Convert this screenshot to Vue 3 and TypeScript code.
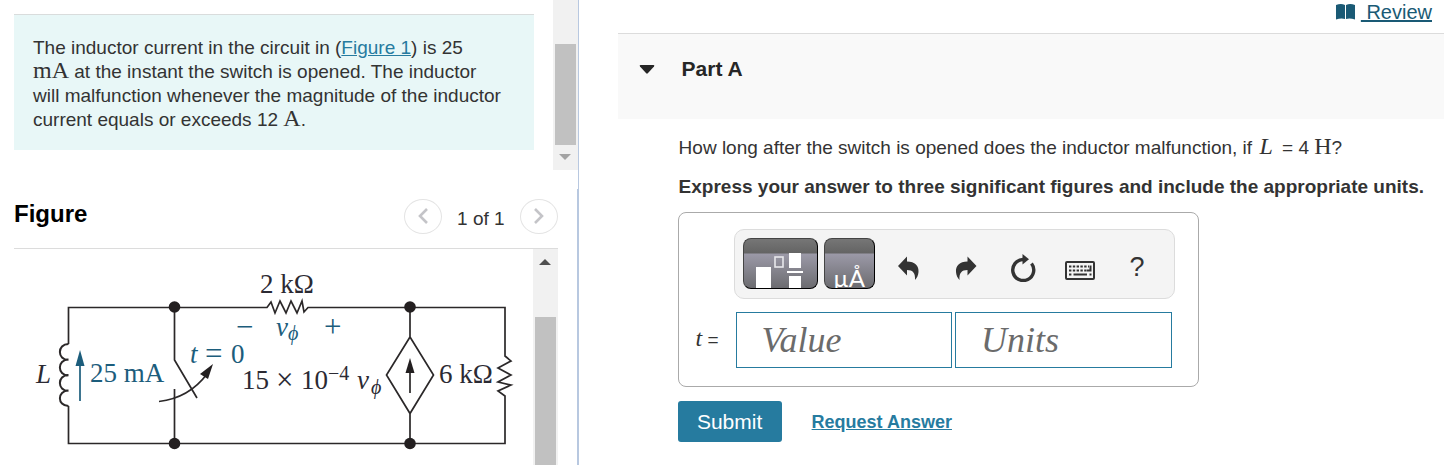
<script setup lang="ts">
import { ref } from 'vue'

const value = ref('')
const units = ref('')
const open = ref(true)
</script>

<template>
  <div class="page">
    <aside class="left">
      <section class="intro">
        <div class="intro-body">
          <p class="problem">
            The inductor current in the circuit in (<a href="#figure">Figure 1</a>) is 25<br />
            <span class="math">mA</span> at the instant the switch is opened. The inductor<br />
            will malfunction whenever the magnitude of the inductor<br />
            current equals or exceeds 12 <span class="math">A</span>.
          </p>
        </div>
        <div class="bar bar-intro" aria-hidden="true">
          <span class="thumb thumb-intro"></span>
          <svg class="tri" width="12" height="6" viewBox="0 0 12 6"><path d="M0 0H12L6 6Z" fill="#a3a3a3" /></svg>
        </div>
      </section>

      <section id="figure" class="figure">
        <header class="figure-head">
          <h2>Figure</h2>
          <nav class="pager" aria-label="Figure pages">
            <button class="round" type="button" aria-label="Previous figure">
              <svg width="12" height="18" viewBox="0 0 12 18"><path d="M10 2L3 9L10 16" fill="none" stroke="#c4c4c8" stroke-width="2.600" /></svg>
            </button>
            <span class="count">1 of 1</span>
            <button class="round" type="button" aria-label="Next figure">
              <svg width="12" height="18" viewBox="0 0 12 18"><path d="M2 2L9 9L2 16" fill="none" stroke="#c4c4c8" stroke-width="2.600" /></svg>
            </button>
          </nav>
        </header>
        <div class="figure-body">
          <div class="canvas">
            <svg class="circuit" width="519" height="212" viewBox="14 249 519 212" role="img" aria-label="Circuit diagram">
              <g fill="none" stroke="#2b2829" stroke-width="1.7">
                <path d="M68.500 344V307.500H267L271 302L275 313L280 301L286 313L291 301L297 313L302 301L304 312L308 307.500H505V356L511 361L498 368L511 375L498 382L511 385L498 391L505 396V443.500H68.500V406" />
                <path d="M68.500 344C57 344 57 360 68.500 360M68.500 359.500C57 359.500 57 375.500 68.500 375.500M68.500 375C57 375 57 391 68.500 391M68.500 390.500C57 390.500 57 406 68.500 406" stroke-width="2" />
                <path d="M174.500 307V360L197 398M174.500 389V443" />
                <path d="M159 401.500C180 399 195 390 207 374" />
                <path d="M410 307V337L433.500 375L410 413.500L386.500 375L410 337M410 413.500V443M410 393V370" />
              </g>
              <g fill="#231f20">
                <circle cx="174.500" cy="307" r="5.800" />
                <circle cx="174.500" cy="443.500" r="5.800" />
                <circle cx="410" cy="307" r="5.800" />
                <circle cx="410" cy="443.500" r="5.800" />
                <path d="M213 364L208 379L200 374Z" />
                <path d="M410 358L414.500 373H405.500Z" />
              </g>
              <path d="M80 401V364" stroke="#1c5d7c" stroke-width="1.700" />
              <path d="M80 350L84.500 366H75.500Z" fill="#1c5d7c" />
              <g class="ink">
                <text x="36" y="383" class="it">L</text>
                <text x="260" y="293">2 kΩ</text>
                <text x="242" y="389">15</text>
                <text x="276" y="390" class="op">×</text>
                <text x="301" y="389">10</text>
                <text x="328" y="380" class="sup">−4</text>
                <text x="357" y="389" class="it">v</text>
                <text x="371" y="394" class="it sub">ϕ</text>
                <text x="439" y="383">6 kΩ</text>
              </g>
              <g class="blue">
                <text x="90" y="382">25 mA</text>
                <text x="190" y="363" class="it">t</text>
                <text x="205" y="364" class="op">=</text>
                <text x="231" y="363">0</text>
                <text x="236" y="337" class="op">−</text>
                <text x="276" y="336" class="it">v</text>
                <text x="288" y="340" class="it sub">ϕ</text>
                <text x="324" y="337" class="op">+</text>
              </g>
            </svg>
          </div>
          <div class="bar bar-figure" aria-hidden="true">
            <svg class="tri" width="12" height="6" viewBox="0 0 12 6"><path d="M0 6H12L6 0Z" fill="#505050" /></svg>
            <span class="thumb thumb-figure"></span>
          </div>
        </div>
      </section>
    </aside>

    <main class="right">
      <div class="review">
        <svg width="20" height="16" viewBox="0 0 20 16" aria-hidden="true">
          <path d="M0 1Q5-1 9 1V15Q5 14 0 15.500ZM10 1Q14-1 19 1V15.500Q14 14 10 15Z" fill="#1a5a75" />
        </svg>
        <a href="#review">&nbsp;Review</a>
      </div>

      <header class="part">
        <button class="toggle" type="button" :aria-expanded="open" aria-label="Toggle Part A" @click="open = !open">
          <svg width="16" height="9" viewBox="0 0 16 9"><path d="M1.500 0H14.500Q16 0 15 1.500L8.800 8.300Q8 9 7.200 8.300L1 1.500Q0 0 1.500 0Z" fill="#262626" /></svg>
        </button>
        <h2>Part A</h2>
      </header>

      <form v-show="open" class="work" @submit.prevent>
        <p class="question">
          How long after the switch is opened does the inductor malfunction, if
          <span class="math it gap">L</span> = 4 <span class="math">H</span>?
        </p>
        <p class="hint">Express your answer to three significant figures and include the appropriate units.</p>

        <div class="answer">
          <div class="toolbar" role="toolbar" aria-label="Answer tools">
            <button class="key key-wide" type="button" aria-label="Templates">
              <svg width="73" height="49" viewBox="1 1 73 49">
                <path d="M13 29H28V50H13ZM46 15H58V30H46ZM44 33H60V35H44ZM46 38H58V50H46Z" fill="#fff" />
                <rect x="32" y="19" width="8" height="10" fill="none" stroke="#e8e8ec" stroke-width="1.600" />
              </svg>
            </button>
            <button class="key key-units" type="button" aria-label="Units symbols"><span>µÅ</span></button>
            <div class="tools">
              <button class="tool" type="button" aria-label="Undo">
                <svg width="22" height="24" viewBox="0 0 22 24"><path d="M0 10L9 0.500V5.500C17 5.500 21 10 20.500 16C20.300 19 19 22 17 24C17.500 17 15 14 9 14V19.500Z" fill="#333" /></svg>
              </button>
              <button class="tool" type="button" aria-label="Redo">
                <svg width="22" height="24" viewBox="0 0 22 24"><path d="M21.500 10L12.500 0.500V5.500C4.500 5.500 0.500 10 1 16C1.200 19 2.500 22 4.500 24C4 17 6.500 14 12.500 14V19.500Z" fill="#333" /></svg>
              </button>
              <button class="tool" type="button" aria-label="Reset">
                <svg width="26" height="28" viewBox="0 0 26 28"><path d="M13 5.500A10.500 10.500 0 1 0 21.500 9.500" fill="none" stroke="#333" stroke-width="3.400" /><path d="M12.500 0L19 5.200L12.500 10.500Z" fill="#333" /></svg>
              </button>
              <button class="tool keyboard" type="button" aria-label="Keyboard">
                <svg width="30" height="19" viewBox="0 0 30 19">
                  <rect x="1" y="1" width="28" height="17" rx="1" fill="none" stroke="#333" stroke-width="2" />
                  <path d="M4 5.500H24M4 9.500H22M4 13.500H6.500M24.500 13.500H26.500" stroke="#333" stroke-width="2" stroke-dasharray="2.400 1.400" />
                  <path d="M8.500 13.500H22M22 9.500H25.500V4.500" fill="none" stroke="#333" stroke-width="2" />
                </svg>
              </button>
              <button class="tool help" type="button" aria-label="Help">?</button>
            </div>
          </div>
          <div class="fields">
            <label for="value"><span class="math it">t</span> =</label>
            <input id="value" v-model="value" type="text" placeholder="Value" />
            <input id="units" v-model="units" type="text" placeholder="Units" aria-label="Units" />
          </div>
        </div>

        <div class="actions">
          <button class="submit" type="submit">Submit</button>
          <a href="#answer">Request Answer</a>
        </div>
      </form>
    </main>
  </div>
</template>

<style>
body {
  margin: 0;
  background: #fff;
}
</style>

<style scoped>
.page {
  display: grid;
  grid-template-columns: minmax(0, 2fr) minmax(0, 3fr);
  height: 100vh;
  overflow: hidden;
  font-family: "Liberation Sans", Arial, sans-serif;
  font-size: 19px;
  line-height: 24px;
  color: #333;
}
h2,
p {
  margin: 0;
}
button {
  padding: 0;
  border: 0;
  background: none;
  font-family: inherit;
  color: inherit;
  cursor: pointer;
}
svg {
  display: block;
}
.math {
  font-family: "Liberation Serif", serif;
  font-size: 24px;
  line-height: 20px;
}
.it {
  font-style: italic;
}
.gap {
  margin: 0 4px 0 2px;
}
.left {
  display: flex;
  flex-direction: column;
  min-height: 0;
}
.intro {
  display: flex;
  height: 170px;
  flex: none;
}
.intro-body {
  flex: 1;
  padding: 14px 19px 0 14px;
}
.problem {
  padding: 21px 12px 18px 19px;
  border-top: 1px solid #d9dcdc;
  background: #e8f7f7;
}
a {
  color: #267b9f;
}
.bar {
  display: flex;
  flex-direction: column;
  align-items: center;
  width: 25px;
  flex: none;
  background: #f1f1f1;
}
.thumb {
  width: 21px;
  background: #c1c1c1;
}
.thumb-intro {
  height: 101px;
  margin: 44px 0 9px;
}
.bar-figure .tri {
  margin: 10px 0 52px;
  flex: none;
}
.thumb-figure {
  flex: 1;
}
.figure {
  display: flex;
  flex: 1;
  flex-direction: column;
  min-height: 0;
  margin-top: 19px;
  padding: 0 19px 0 14px;
  border-right: 1px solid #b8c8e0;
}
.figure-head {
  display: flex;
  align-items: center;
  justify-content: space-between;
  height: 60px;
  padding-bottom: 5px;
  box-sizing: border-box;
  flex: none;
  border-bottom: 1px solid #dcdcdc;
}
.figure-head h2 {
  padding-bottom: 4px;
  font-size: 24px;
  color: #000;
}
.pager {
  display: flex;
  align-items: center;
  gap: 15px;
}
.count {
  padding-top: 5px;
}
.round {
  display: flex;
  align-items: center;
  justify-content: center;
  width: 38px;
  height: 35px;
  border: 1px solid #e4e4e4;
  border-radius: 50%;
}
.figure-body {
  display: flex;
  flex: 1;
  min-height: 0;
}
.canvas {
  flex: 1;
  min-width: 0;
  overflow: hidden;
}
.circuit text {
  font-family: "Liberation Serif", serif;
  font-size: 27px;
}
.circuit .it {
  font-style: italic;
}
.circuit .op {
  font-size: 31px;
}
.circuit .sup,
.circuit .sub {
  font-size: 20px;
}
.ink {
  fill: #2b2a33;
}
.blue {
  fill: #1c5d7c;
}
.right {
  border-left: 1px solid #b8c8e0;
  padding-left: 39px;
}
.review {
  display: flex;
  align-items: center;
  justify-content: flex-end;
  gap: 5px;
  height: 33px;
  padding: 0 12px 9px 0;
  box-sizing: border-box;
  font-size: 20px;
}
.review a {
  color: #1a5a75;
}
.part {
  display: flex;
  align-items: center;
  gap: 27px;
  height: 86px;
  padding: 0 21px 15px;
  box-sizing: border-box;
  border-top: 1px solid #dcdcdc;
  background: #f9f9f9;
}
.part h2 {
  font-size: 21px;
  color: #262626;
}
.work {
  padding: 17px 0 0 60px;
}
.question,
.hint {
  padding-left: 1px;
  white-space: nowrap;
}
.hint {
  margin-top: 15px;
  font-weight: bold;
}
.answer {
  width: 521px;
  margin-top: 13px;
  padding: 16px 23px 18px 17px;
  box-sizing: border-box;
  border: 1px solid #aaa;
  border-radius: 8px;
}
.toolbar {
  display: flex;
  align-items: center;
  height: 70px;
  margin-left: 38px;
  padding: 0 8px;
  box-sizing: border-box;
  border: 1px solid #dcdcdc;
  border-radius: 10px;
  background: #f4f4f4;
}
.key {
  flex: none;
  height: 51px;
  margin-right: 6px;
  margin-bottom: 2px;
  overflow: hidden;
  border: 1px solid #000;
  border-top-color: #444;
  border-left-color: #444;
  border-radius: 8px;
  background: linear-gradient(#767676, #646464 14px, #9b99a7 15px, #6c6c70);
  color: #fff;
}
.key-wide {
  width: 75px;
}
.key-units {
  width: 51px;
  font-family: Lato, sans-serif;
  font-size: 24px;
}
.key-units span {
  display: block;
  padding-top: 23px;
  line-height: 32px;
}
.tools {
  display: flex;
  flex: 1;
  align-items: center;
  padding-top: 7px;
}
.tool {
  display: flex;
  align-items: center;
  justify-content: center;
  width: 57px;
  height: 48px;
  color: #333;
}
.keyboard {
  padding-top: 5px;
}
.help {
  font-size: 27px;
}
.fields {
  display: flex;
  align-items: center;
  gap: 3px;
  margin-top: 13px;
  padding-right: 3px;
}
.fields label {
  flex: none;
  width: 37px;
}
.fields input {
  flex: 1;
  min-width: 0;
  height: 56px;
  padding: 0 25px;
  box-sizing: border-box;
  border: 1px solid #267b9f;
  border-radius: 0;
  font-family: "Liberation Serif", serif;
  font-size: 36px;
  font-style: italic;
}
.fields input::placeholder {
  color: #6b6b6b;
}
.actions {
  display: flex;
  align-items: center;
  gap: 30px;
  margin-top: 14px;
}
.submit {
  width: 104px;
  height: 41px;
  border-radius: 3px;
  background: #267b9f;
  color: #fff;
  font-size: 21px;
}
.actions a {
  font-size: 18px;
  font-weight: bold;
}
</style>
